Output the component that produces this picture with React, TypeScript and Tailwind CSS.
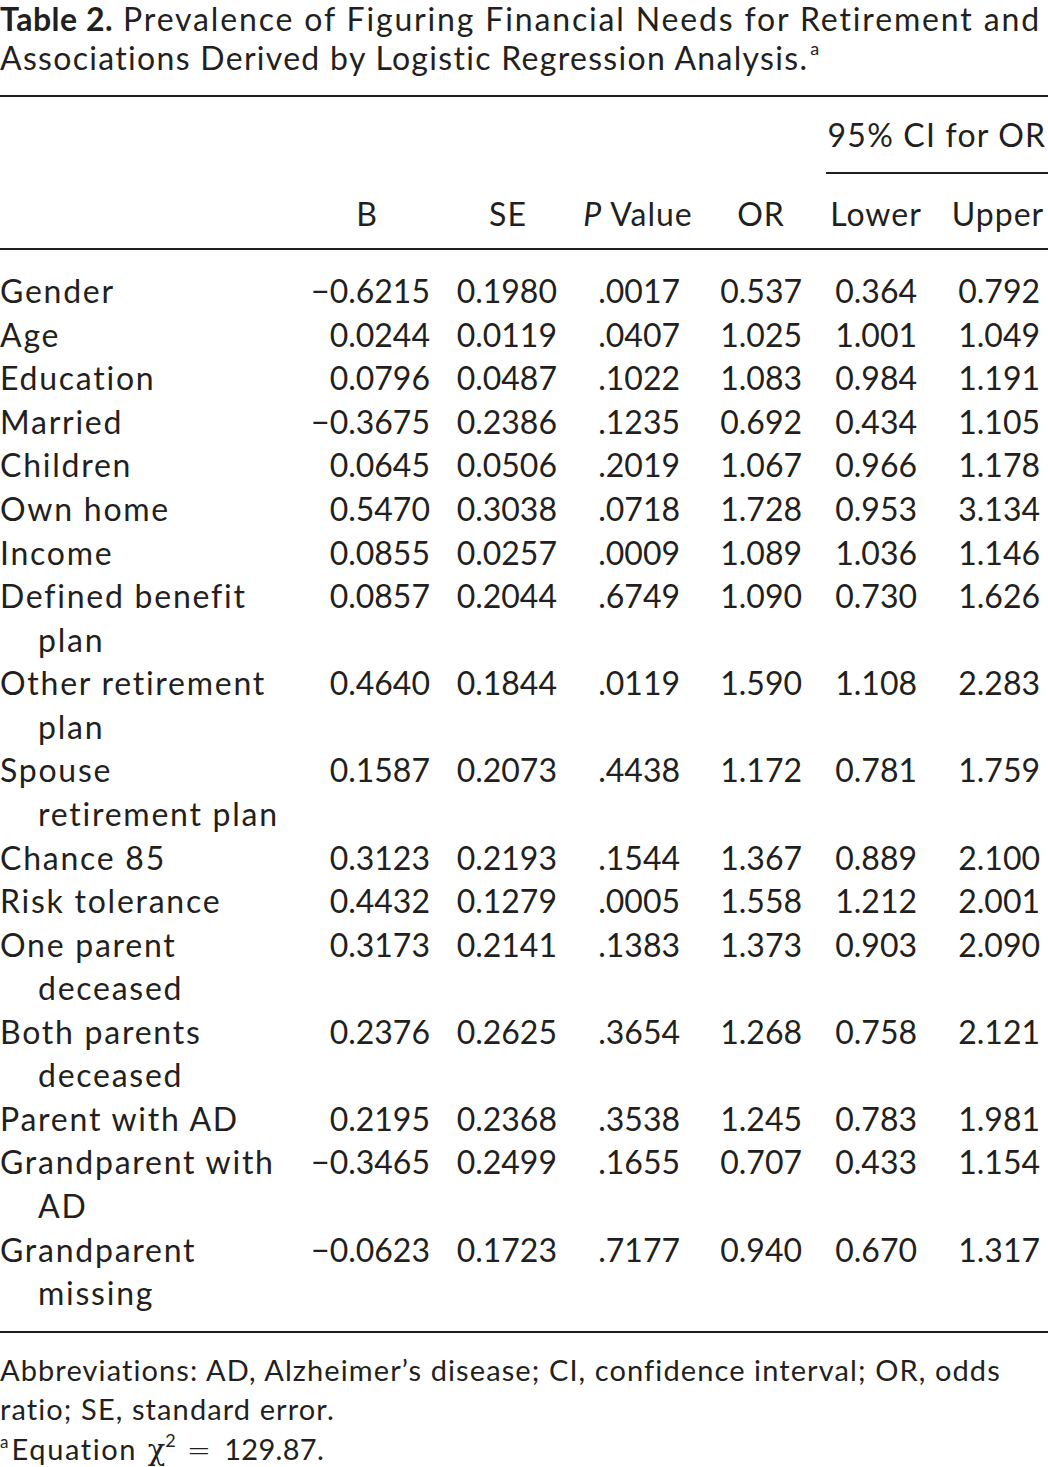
type Row = {
  label: string[];
  values: string[];
};

const rows: Row[] = [
  { label: ['Gender'], values: ['−0.6215', '0.1980', '.0017', '0.537', '0.364', '0.792'] },
  { label: ['Age'], values: ['0.0244', '0.0119', '.0407', '1.025', '1.001', '1.049'] },
  { label: ['Education'], values: ['0.0796', '0.0487', '.1022', '1.083', '0.984', '1.191'] },
  { label: ['Married'], values: ['−0.3675', '0.2386', '.1235', '0.692', '0.434', '1.105'] },
  { label: ['Children'], values: ['0.0645', '0.0506', '.2019', '1.067', '0.966', '1.178'] },
  { label: ['Own home'], values: ['0.5470', '0.3038', '.0718', '1.728', '0.953', '3.134'] },
  { label: ['Income'], values: ['0.0855', '0.0257', '.0009', '1.089', '1.036', '1.146'] },
  { label: ['Defined benefit', 'plan'], values: ['0.0857', '0.2044', '.6749', '1.090', '0.730', '1.626'] },
  { label: ['Other retirement', 'plan'], values: ['0.4640', '0.1844', '.0119', '1.590', '1.108', '2.283'] },
  { label: ['Spouse', 'retirement plan'], values: ['0.1587', '0.2073', '.4438', '1.172', '0.781', '1.759'] },
  { label: ['Chance 85'], values: ['0.3123', '0.2193', '.1544', '1.367', '0.889', '2.100'] },
  { label: ['Risk tolerance'], values: ['0.4432', '0.1279', '.0005', '1.558', '1.212', '2.001'] },
  { label: ['One parent', 'deceased'], values: ['0.3173', '0.2141', '.1383', '1.373', '0.903', '2.090'] },
  { label: ['Both parents', 'deceased'], values: ['0.2376', '0.2625', '.3654', '1.268', '0.758', '2.121'] },
  { label: ['Parent with AD'], values: ['0.2195', '0.2368', '.3538', '1.245', '0.783', '1.981'] },
  { label: ['Grandparent with', 'AD'], values: ['−0.3465', '0.2499', '.1655', '0.707', '0.433', '1.154'] },
  { label: ['Grandparent', 'missing'], values: ['−0.0623', '0.1723', '.7177', '0.940', '0.670', '1.317'] },
];

// label | B | SE | P | OR | Lower | Upper  (tracks end at each column's right edge)
const cols = 'grid grid-cols-[304px_126px_127px_123px_122px_115px_123px]';

export default function App() {
  return (
    <div className="w-[1048px] h-[1467px] overflow-hidden bg-white text-[#231f20] font-['Lato','Open_Sans',sans-serif]">
      {/* Title */}
      <div className="text-[32px] whitespace-nowrap">
        <div className="leading-[38px] tracking-[1.85px]">
          <span className="font-bold tracking-[0.5px]">Table 2.</span> Prevalence of Figuring Financial Needs for Retirement and
        </div>
        <div className="leading-[39px] tracking-[1.3px]">
          Associations Derived by Logistic Regression Analysis.
          <sup className="text-[18px] top-[-15px] ml-[2px]">a</sup>
        </div>
      </div>

      <div className="mt-[18px] h-[2px] bg-[#231f20]" />

      {/* Spanner header */}
      <div className="mt-[16px] flex justify-end">
        <div className="w-[222px] flex flex-col">
          <div className="text-center text-[32px] leading-[43.6px] whitespace-nowrap tracking-[1.2px]">95% CI for OR</div>
          <div className="mt-[15px] h-[2px] bg-[#231f20]" />
        </div>
      </div>

      {/* Column header */}
      <div className={`${cols} mt-[18px] text-[32px] leading-[43.6px] whitespace-nowrap tracking-[1px]`}>
        <div />
        <div className="flex justify-center">B</div>
        <div className="flex justify-center pl-[29px]">SE</div>
        <div className="flex justify-center pl-[39px]">
          <span>
            <span className="italic">P</span> Value
          </span>
        </div>
        <div className="flex justify-center pl-[40px]">OR</div>
        <div className="flex justify-center pl-[33px]">Lower</div>
        <div className="flex justify-center pl-[39px]">Upper</div>
      </div>

      <div className="mt-[13px] h-[2px] bg-[#231f20]" />

      {/* Body */}
      <div className="pt-[19px] text-[32px] leading-[43.565px]">
        {rows.map((row) => (
          <div key={row.label.join(' ')} className={cols}>
            <div className="whitespace-nowrap tracking-[1.75px]">
              {row.label.map((line, i) => (
                <div key={line} className={i > 0 ? 'pl-[38px]' : ''}>
                  {line}
                </div>
              ))}
            </div>
            {row.values.map((v, i) => (
              <div key={i} className="text-right whitespace-nowrap">
                {v}
              </div>
            ))}
          </div>
        ))}
      </div>

      <div className="mt-[16px] h-[2px] bg-[#231f20]" />

      {/* Footnotes */}
      <div className="mt-[17px] text-[29px] leading-[39.5px] whitespace-nowrap tracking-[1.1px]">
        <div>Abbreviations: AD, Alzheimer’s disease; CI, confidence interval; OR, odds</div>
        <div>ratio; SE, standard error.</div>
        <div>
          <sup className="text-[17px] top-[-12px] mr-[2px]">a</sup>
          <span className="tracking-[1.6px]">Equation</span>{' '}
          <span className="font-['DejaVu_Serif',serif] text-[29px] ml-[2px] tracking-normal">χ</span>
          <sup className="text-[18px] top-[-13px]">2</sup>
          <span className="font-['DejaVu_Sans',sans-serif] font-extralight text-[29px] ml-[10px] mr-[12px]">=</span>
          <span className="tracking-[0.3px]">129.87.</span>
        </div>
      </div>
    </div>
  );
}
